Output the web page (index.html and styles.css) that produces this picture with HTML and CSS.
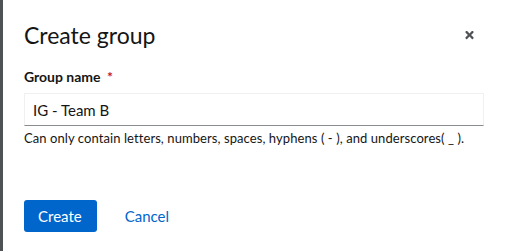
FILE: index.html
```html
<html><head>
<link rel="stylesheet" href="styles.css">
</head>
<body>
<div class="page">
    <div class="backdrop-edge"></div>
    <div class="modal">
        <div class="modal-header">
            <h1 class="modal-title">Create group</h1>
            <button class="close-btn" aria-label="Close">
                <svg viewBox="0 0 352 512" width="9" height="12" fill="#4f5255">
                    <path d="M242.72 256l100.07-100.07c12.28-12.28 12.28-32.19 0-44.48l-22.24-22.24c-12.28-12.28-32.19-12.28-44.48 0L176 189.28 75.93 89.21c-12.28-12.28-32.19-12.28-44.48 0L9.21 111.45c-12.28 12.28-12.28 32.19 0 44.48L109.28 256 9.21 356.07c-12.28 12.28-12.28 32.19 0 44.48l22.24 22.24c12.28 12.28 32.2 12.28 44.48 0L176 322.72l100.07 100.07c12.28 12.28 32.2 12.28 44.48 0l22.24-22.24c12.28-12.28 12.28-32.19 0-44.48L242.72 256z"></path>
                </svg>
            </button>
        </div>
        <form class="form">
            <div class="form-group">
                <label for="groupName">Group name <span class="required">*</span></label>
                <input type="text" id="groupName" value="IG - Team B">
                <div class="helper-text">Can only contain letters, numbers, spaces, hyphens ( - ), and underscores( _ ).</div>
            </div>
        </form>
        <div class="modal-footer">
            <button class="btn-primary">Create</button>
            <button class="btn-link">Cancel</button>
        </div>
    </div>
</div>
</body>
</html>
```

FILE: styles.css
```css
:root {
    --text-primary: #151515;
    --accent-color: #0066cc;
    --danger: #c9190b;
    --border-light: #f0f0f0;
    --border-dark: #8a8d90;
}

body {
    margin: 0;
    font-family: Lato, "Liberation Sans", sans-serif;
    color: var(--text-primary);
    background: #ffffff;
}

.page {
    display: flex;
    height: 251px;
}

.backdrop-edge {
    width: 3px;
    background: #4f5255;
    flex-shrink: 0;
}

.modal {
    flex: 1;
    padding: 19px 22px 0 21px;
}

.modal-header {
    display: flex;
    align-items: center;
    justify-content: space-between;
}

.modal-title {
    margin: 0;
    font-size: 23px;
    font-weight: 400;
    line-height: 32px;
}

.close-btn {
    background: none;
    border: none;
    padding: 0;
    margin-right: 10px;
    cursor: pointer;
    display: flex;
}

.form {
    margin-top: 16px;
}

label {
    display: block;
    font-size: 14px;
    font-weight: 700;
    line-height: 20px;
    margin-bottom: 6px;
}

.required {
    color: var(--danger);
    margin-left: 3px;
}

input[type="text"] {
    box-sizing: border-box;
    width: 100%;
    height: 33px;
    padding: 5px 8px;
    font-family: inherit;
    font-size: 15px;
    color: var(--text-primary);
    border: 1px solid var(--border-light);
    border-bottom-color: var(--border-dark);
    outline: none;
}

.helper-text {
    font-size: 13px;
    letter-spacing: 0.08px;
    line-height: 20px;
    margin-top: 2px;
}

.modal-footer {
    display: flex;
    align-items: center;
    gap: 14px;
    margin-top: 52px;
}

.btn-primary {
    background: var(--accent-color);
    color: white;
    border: none;
    border-radius: 3px;
    padding: 6px 15px 6px 14px;
    font-family: inherit;
    font-size: 15px;
    line-height: 20px;
    cursor: pointer;
}

.btn-link {
    background: none;
    border: none;
    color: var(--accent-color);
    padding: 6px 14px;
    font-family: inherit;
    font-size: 15px;
    line-height: 20px;
    cursor: pointer;
}
```
